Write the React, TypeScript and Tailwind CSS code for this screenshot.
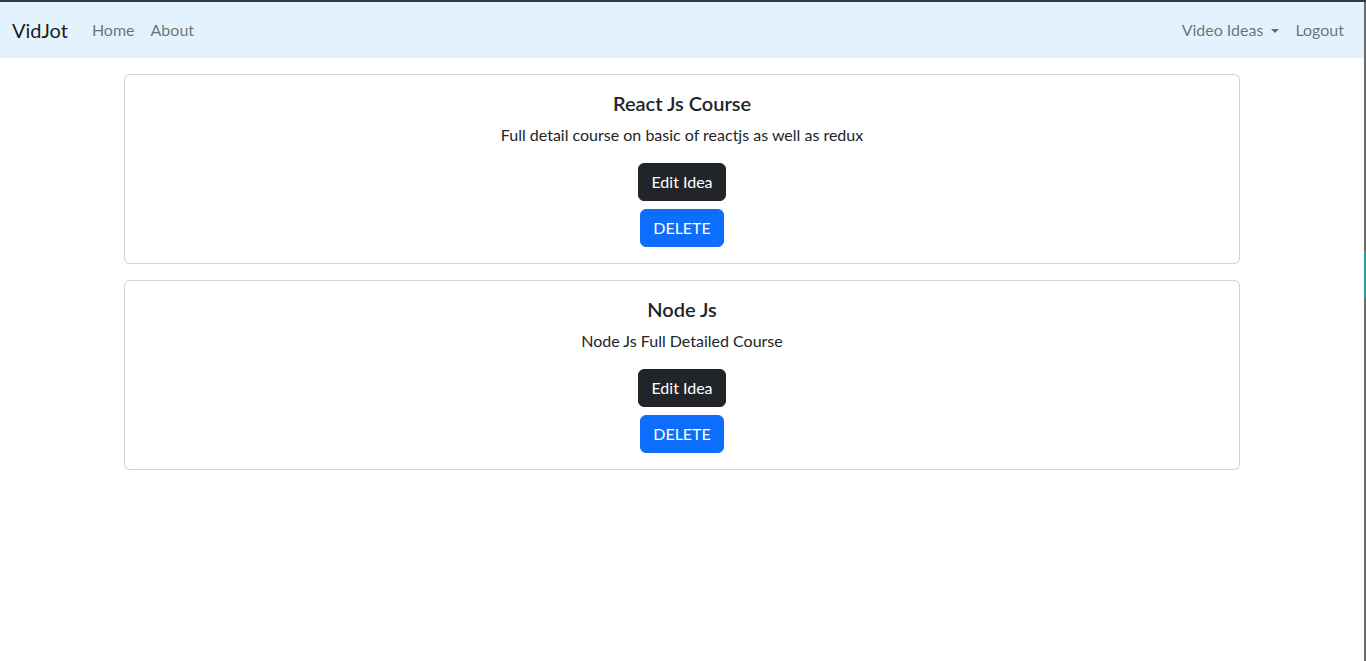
import React from "react";

const ideas = [
  { title: "React Js Course", details: "Full detail course on basic of reactjs as well as redux" },
  { title: "Node Js", details: "Node Js Full Detailed Course" },
];

function IdeaCard({ title, details }: { title: string; details: string }) {
  return (
    <div className="mb-4 rounded-[6px] border border-[rgba(0,0,0,0.175)] bg-white p-4 text-center">
      <h4 className="mb-2 text-[20px] font-semibold leading-[24px] text-[#212529]">{title}</h4>
      <p className="mb-4 text-[16px] leading-[24px] text-[#212529]">{details}</p>
      <div className="flex flex-col items-center gap-2">
        <button className="rounded-[6px] border border-[#212529] bg-[#212529] px-3 py-[6px] text-[16px] leading-[24px] text-white">
          Edit Idea
        </button>
        <button className="rounded-[6px] border border-[#0d6efd] bg-[#0d6efd] px-3 py-[6px] text-[16px] leading-[24px] text-white">
          DELETE
        </button>
      </div>
    </div>
  );
}

export default function App() {
  return (
    <div
      className="flex h-[661px] flex-col bg-white"
      style={{ fontFamily: "Lato, 'Noto Sans', sans-serif" }}
    >
      <div className="h-[2px] bg-[#3a3a3a]" />
      <div className="flex flex-1">
        <div className="flex-1">
          <nav className="flex h-[56px] items-center justify-between bg-[#e3f2fd] px-3">
            <div className="flex items-center">
              <span className="mr-4 text-[20px] leading-[30px] text-[rgba(0,0,0,0.9)]">VidJot</span>
              <a className="px-2 text-[16px] leading-[24px] text-[rgba(0,0,0,0.55)]">Home</a>
              <a className="px-2 text-[16px] leading-[24px] text-[rgba(0,0,0,0.55)]">About</a>
            </div>
            <div className="flex items-center">
              <a className="flex items-center px-2 text-[16px] leading-[24px] text-[rgba(0,0,0,0.55)]">
                Video Ideas
                <span className="ml-[8px] mt-[1px] h-0 w-0 border-x-[4px] border-t-[4px] border-x-transparent border-t-[rgba(0,0,0,0.55)]" />
              </a>
              <a className="px-2 text-[16px] leading-[24px] text-[rgba(0,0,0,0.55)]">Logout</a>
            </div>
          </nav>
          <div className="mx-auto mt-4 w-[1140px] px-3">
            {ideas.map((idea) => (
              <IdeaCard key={idea.title} title={idea.title} details={idea.details} />
            ))}
          </div>
        </div>
        <div className="flex w-[2px] flex-col bg-[#6b6b6b]">
          <div className="h-[249px]" />
          <div className="h-[46px] bg-[#2a9d9a]" />
        </div>
      </div>
    </div>
  );
}
